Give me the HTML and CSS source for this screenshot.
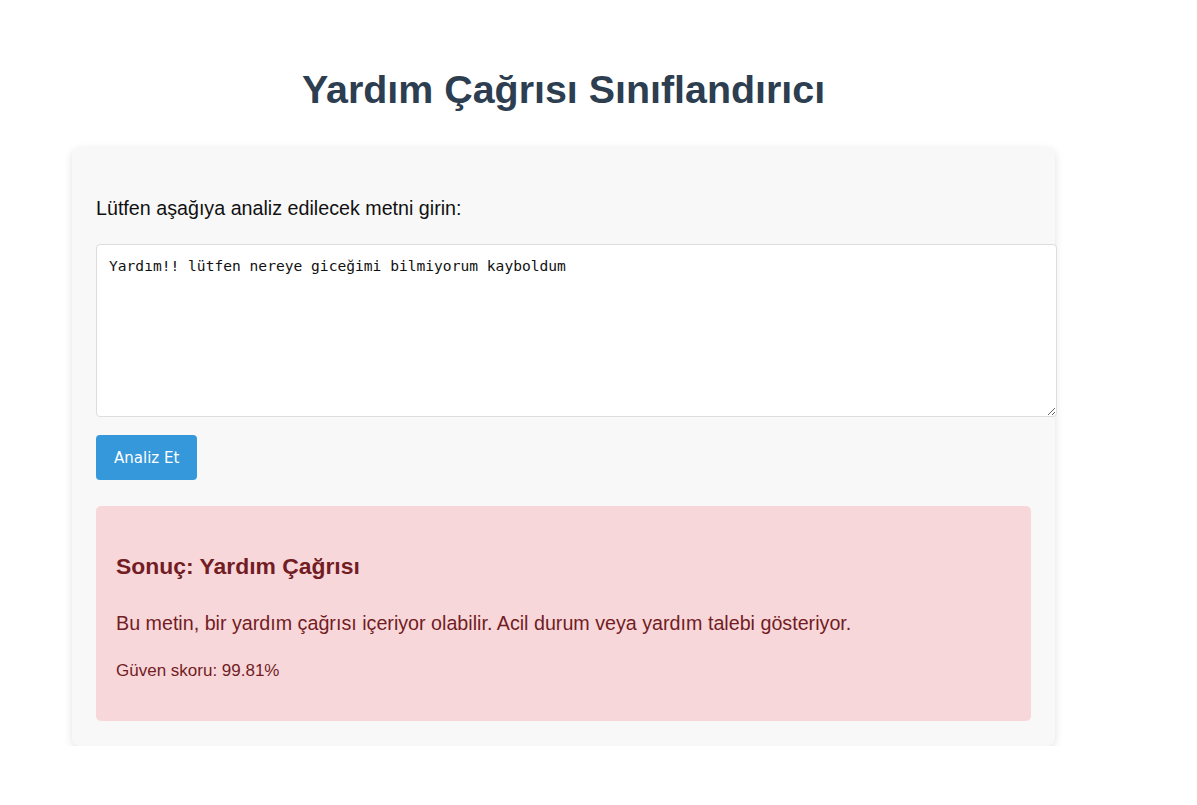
FILE: index.html
```html
<!DOCTYPE html>
<html lang="tr">
<head>
<meta charset="utf-8">
<title>Yardım Çağrısı Sınıflandırıcı</title>
<link rel="stylesheet" href="styles.css">
</head>
<body>
<main class="page">
  <h1 class="title">Yardım Çağrısı Sınıflandırıcı</h1>
  <section class="card">
    <label class="label" for="text">Lütfen aşağıya analiz edilecek metni girin:</label>
    <textarea id="text" class="input">Yardım!! lütfen nereye giceğimi bilmiyorum kayboldum</textarea>
    <button class="button" type="button">Analiz Et</button>
    <div class="result">
      <h3 class="result-title">Sonuç: Yardım Çağrısı</h3>
      <p class="result-text">Bu metin, bir yardım çağrısı içeriyor olabilir. Acil durum veya yardım talebi gösteriyor.</p>
      <p class="result-score">Güven skoru: 99.81%</p>
    </div>
  </section>
</main>
</body>
</html>
```
FILE: styles.css
```css
html, body {
  margin: 0;
  padding: 0;
  background: #ffffff;
}
body {
  font-family: "Liberation Sans", Arial, sans-serif;
}
.page {
  width: 983px;
  margin-left: 72px;
  padding-top: 66px;
}
.title {
  margin: 0 0 36px;
  text-align: center;
  font-size: 39.4px;
  font-weight: bold;
  color: #2c3e50;
  line-height: 46px;
}
.card {
  display: flex;
  flex-direction: column;
  align-items: flex-start;
  background: #f8f8f8;
  border-radius: 8px;
  box-shadow: 0 2px 8px rgba(0, 0, 0, 0.12);
  padding: 49px 24px 25px;
}
.label {
  display: block;
  font-size: 19.7px;
  line-height: 22px;
  color: #111;
  margin-bottom: 25px;
}
.input {
  box-sizing: content-box;
  width: 935px;
  height: 147px;
  padding: 12px;
  border: 1px solid #dddddd;
  border-radius: 4px;
  background: #fff;
  font-family: "DejaVu Sans Mono", monospace;
  font-size: 14.6px;
  color: #111;
  resize: vertical;
  margin: 0 0 18px;
}
.button {
  font-family: "DejaVu Sans", sans-serif;
  font-size: 15px;
  color: #fff;
  background: #3498db;
  border: none;
  border-radius: 4px;
  padding: 0 18px;
  height: 45px;
  margin-bottom: 26px;
  cursor: pointer;
}
.result {
  box-sizing: border-box;
  width: 935px;
  background: #f8d7da;
  border-radius: 5px;
  padding: 35px 20px 40px;
  color: #721c24;
}
.result-title {
  margin: 12px 0 0;
  font-size: 22.9px;
  line-height: 26px;
  font-weight: bold;
}
.result-text {
  margin: 32px 0 0;
  font-size: 19.7px;
  line-height: 24px;
}
.result-score {
  margin: 26px 0 0;
  font-size: 17px;
  line-height: 20px;
}
```
